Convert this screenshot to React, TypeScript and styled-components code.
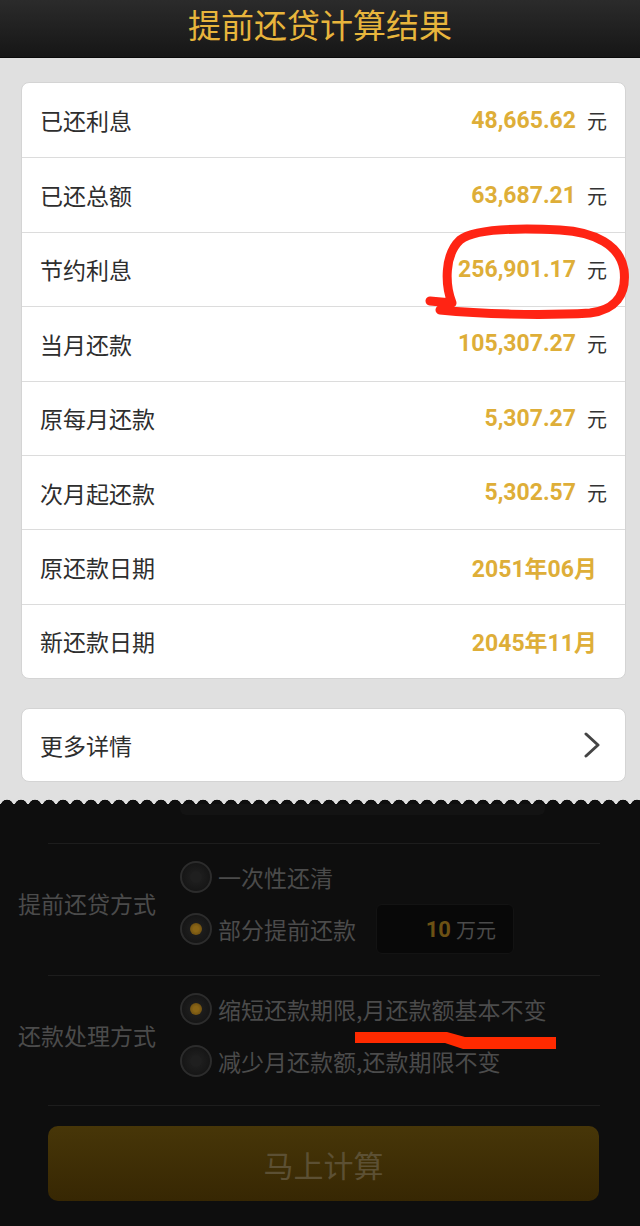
import React from "react";
import styled, { createGlobalStyle } from "styled-components";

const Global = createGlobalStyle`
  html, body { margin: 0; padding: 0; background: #0e0e0e; }
  body { font-family: "Noto Sans CJK SC", "Noto Sans", sans-serif; }
  * { box-sizing: border-box; }
`;

const Page = styled.div`
  position: relative;
  width: 640px;
  height: 1226px;
  overflow: hidden;
  display: flex;
  flex-direction: column;
  background: #0e0e0e;
`;

const Header = styled.header`
  height: 58px;
  flex: none;
  background: linear-gradient(#2b2b2b, #161616);
  border-bottom: 1px solid #0a0a0a;
  display: flex;
  justify-content: center;
`;

const Title = styled.h1`
  margin: 0;
  font-size: 33px;
  font-weight: 400;
  line-height: 48px;
  color: #e8b53c;
`;

const GrayArea = styled.section`
  background: #e0e0e0;
  padding: 24px 14px 16px 21px;
  display: flex;
  flex-direction: column;
  gap: 29px;
`;

const Card = styled.div`
  background: #fff;
  border: 1px solid #d4d4d4;
  border-radius: 8px;
  display: flex;
  flex-direction: column;
`;

const Row = styled.div<{ $pr: number }>`
  height: 74.4px;
  display: flex;
  align-items: center;
  padding: 0 ${(p) => p.$pr}px 0 18px;
  & + & { border-top: 1px solid #dcdcdc; }
`;

const Label = styled.span`
  flex: 1;
  font-size: 23px;
  color: #2e2e2e;
`;

const Value = styled.span`
  font-family: Roboto, "Noto Sans CJK SC", sans-serif;
  font-weight: 700;
  font-size: 23px;
  color: #deae38;
`;

const Unit = styled.span`
  margin-left: 11px;
  font-size: 20px;
  color: #333;
`;

const MoreCard = styled(Card)`
  height: 74px;
  flex-direction: row;
  align-items: center;
  justify-content: space-between;
  padding: 0 24px 0 18px;
`;

const Wave = styled.div`
  height: 6px;
  flex: none;
  background: radial-gradient(circle at 7px 8px, #0e0e0e 6px, transparent 6.6px) 0 0 / 14px 6px repeat-x, #e0e0e0;
`;

const DarkArea = styled.section`
  flex: 1;
  display: flex;
  flex-direction: column;
  background: #0e0e0e;
`;

const TopBar = styled.div`
  margin-left: 180px;
  width: 365px;
  height: 11px;
  background: #131313;
  border-radius: 0 0 6px 6px;
`;

const Divider = styled.div<{ $mt?: number }>`
  height: 1px;
  margin: ${(p) => p.$mt ?? 0}px 40px 0 48px;
  background: #1d1d1d;
`;

const FormSection = styled.div<{ $h: number }>`
  height: ${(p) => p.$h}px;
  display: grid;
  grid-template-columns: 162px 1fr;
  align-items: center;
  padding: 7px 0 20px 18px;
`;

const FormLabel = styled.span`
  font-size: 23px;
  color: #4b4b4b;
`;

const Options = styled.div`
  display: flex;
  flex-direction: column;
`;

const Option = styled.div`
  height: 52px;
  display: flex;
  align-items: center;
  gap: 6px;
`;

const Radio = styled.span<{ $on?: boolean }>`
  width: 32px;
  height: 32px;
  border-radius: 50%;
  border: 2px solid #2c2c2c;
  background: radial-gradient(circle, #222 0%, #161616 70%);
  display: flex;
  align-items: center;
  justify-content: center;
  &::after {
    content: "";
    width: 12px;
    height: 12px;
    border-radius: 50%;
    background: ${(p) => (p.$on ? "radial-gradient(circle, #8a6516 30%, #5e440e 100%)" : "#1f1f1f")};
  }
`;

const OptionText = styled.span`
  font-size: 23px;
  color: #4b4b4b;
  white-space: nowrap;
`;

const AmountBox = styled.div`
  margin-left: 14px;
  width: 138px;
  height: 50px;
  border-radius: 6px;
  background: #080808;
  border: 1px solid #131313;
  display: flex;
  align-items: center;
  justify-content: flex-end;
  padding-right: 17px;
  gap: 5px;
`;

const AmountNum = styled.span`
  font-family: Roboto, sans-serif;
  font-weight: 700;
  font-size: 22px;
  color: #6c5114;
`;

const AmountUnit = styled.span`
  font-size: 20px;
  color: #4b4b4b;
`;

const ButtonWrap = styled.div`
  padding: 20px 41px 0 48px;
`;

const CalcButton = styled.button`
  width: 100%;
  height: 75px;
  border: none;
  border-radius: 10px;
  background: linear-gradient(#473608, #372703);
  color: #5c5034;
  font-family: "Noto Sans CJK SC", sans-serif;
  font-size: 30px;
`;

const Overlay = styled.svg`
  position: absolute;
  left: 0;
  top: 0;
  pointer-events: none;
`;

const rows: { label: string; value: string; unit?: boolean }[] = [
  { label: "已还利息", value: "48,665.62", unit: true },
  { label: "已还总额", value: "63,687.21", unit: true },
  { label: "节约利息", value: "256,901.17", unit: true },
  { label: "当月还款", value: "105,307.27", unit: true },
  { label: "原每月还款", value: "5,307.27", unit: true },
  { label: "次月起还款", value: "5,302.57", unit: true },
  { label: "原还款日期", value: "2051年06月" },
  { label: "新还款日期", value: "2045年11月" },
];

export default function App() {
  return (
    <Page>
      <Global />
      <Header>
        <Title>提前还贷计算结果</Title>
      </Header>
      <GrayArea>
        <Card>
          {rows.map((r) => (
            <Row key={r.label} $pr={r.unit ? 18 : 28}>
              <Label>{r.label}</Label>
              <Value>{r.value}</Value>
              {r.unit && <Unit>元</Unit>}
            </Row>
          ))}
        </Card>
        <MoreCard>
          <Label>更多详情</Label>
          <svg width="18" height="26" viewBox="0 0 18 26">
            <path d="M3 2 L15 13 L3 24" fill="none" stroke="#444" strokeWidth="3" strokeLinecap="round" strokeLinejoin="round" />
          </svg>
        </MoreCard>
      </GrayArea>
      <Wave />
      <DarkArea>
        <TopBar />
        <Divider $mt={28} />
        <FormSection $h={131}>
          <FormLabel>提前还贷方式</FormLabel>
          <Options>
            <Option>
              <Radio />
              <OptionText>一次性还清</OptionText>
            </Option>
            <Option>
              <Radio $on />
              <OptionText>部分提前还款</OptionText>
              <AmountBox>
                <AmountNum>10</AmountNum>
                <AmountUnit>万元</AmountUnit>
              </AmountBox>
            </Option>
          </Options>
        </FormSection>
        <Divider />
        <FormSection $h={129}>
          <FormLabel>还款处理方式</FormLabel>
          <Options>
            <Option>
              <Radio $on />
              <OptionText>缩短还款期限,月还款额基本不变</OptionText>
            </Option>
            <Option>
              <Radio />
              <OptionText>减少月还款额,还款期限不变</OptionText>
            </Option>
          </Options>
        </FormSection>
        <Divider />
        <ButtonWrap>
          <CalcButton>马上计算</CalcButton>
        </ButtonWrap>
      </DarkArea>
      <Overlay width="640" height="1226" viewBox="0 0 640 1226">
        <path
          d="M430 301 L452 303 C445 285 444 255 460 240 C475 228 520 228 560 230 C595 232 620 245 624 270 C627 295 615 310 590 313 C540 316 480 314 440 310"
          fill="none"
          stroke="#ff2414"
          strokeWidth="9"
          strokeLinecap="round"
          strokeLinejoin="round"
        />
        <polygon points="355,1032 447,1032 465,1037 556,1037 556,1049 463,1049 445,1043 355,1043" fill="#ff2a00" />
      </Overlay>
    </Page>
  );
}
